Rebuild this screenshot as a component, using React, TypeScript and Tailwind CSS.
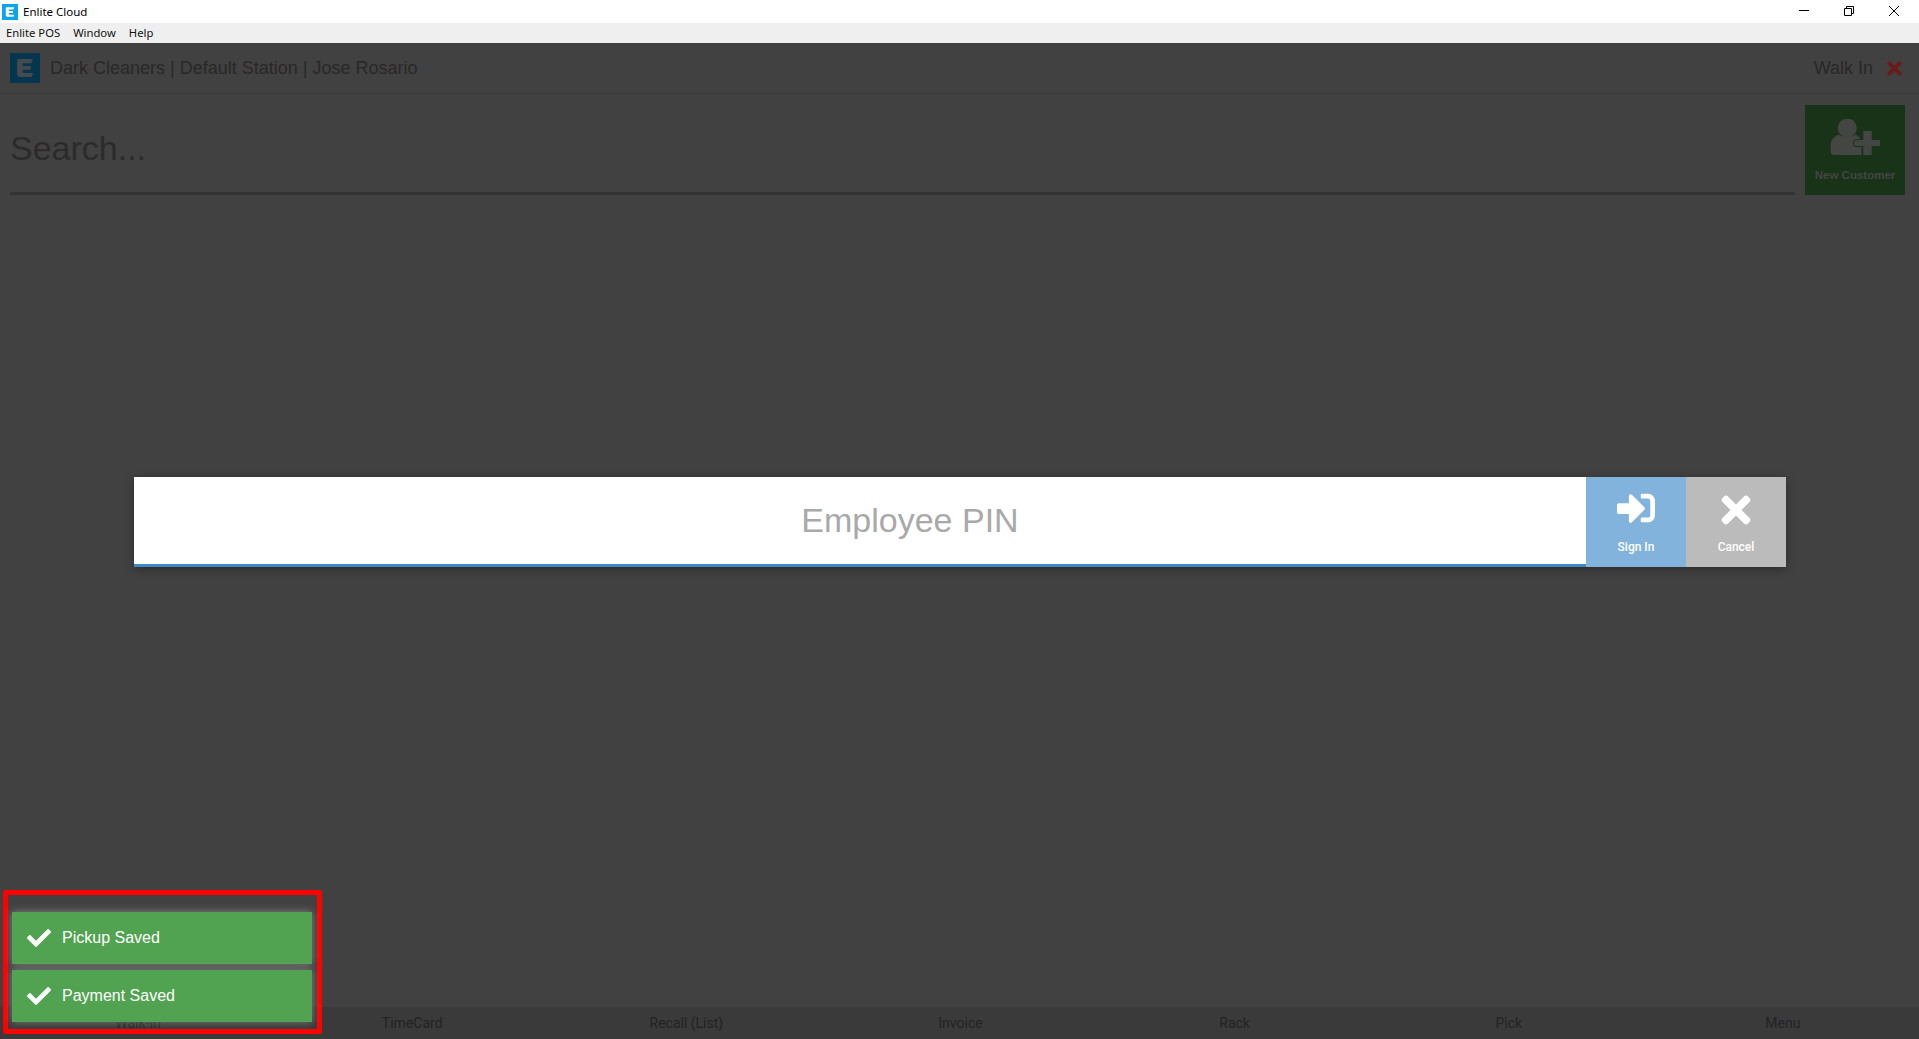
import React from 'react';
import { FaCheck, FaSignInAlt, FaTimes } from 'react-icons/fa';

const navItems = ['Walk-In', 'TimeCard', 'Recall (List)', 'Invoice', 'Rack', 'Pick', 'Menu'];

function EnliteLogo({ color }: { color: string }) {
  return (
    <svg viewBox="0 0 16 16" className="w-full h-full">
      <path
        d="M5 3.200h7.200l-.8 2.200H6.800v1.500H11v2H6.800v.9c0 .5.3.9.9.9h4.600l-.8 2.100H5.600C4.400 12.800 3.800 12 3.800 11V4.200C3.800 3.600 4.300 3.200 5 3.200z"
        fill={color}
      />
    </svg>
  );
}

function UserPlusIcon() {
  return (
    <svg viewBox="0 0 50 38" className="w-[50px] h-[38px]">
      <circle cx="17.300" cy="9" r="9.500" fill="#444644" />
      <path
        d="M9 15.500C12 19 22 19 25.500 15.500C29 17 31.500 20 31.500 24V36H4C2 36 .7 34.500 .7 32.500V26C.7 21 4 17 9 15.500z"
        fill="#444644"
      />
      <path
        d="M33.300 12h8.400v9H50v6h-8.300v9h-8.400v-9H27a3 3 0 0 1 0-6h6.300z"
        fill="#444644"
        stroke="#183318"
        strokeWidth="2"
        paintOrder="stroke"
      />
    </svg>
  );
}

export default function App() {
  return (
    <div className="relative flex flex-col h-[1039px] w-full overflow-hidden bg-[#414141] font-['Liberation_Sans',sans-serif]">
      {/* window chrome */}
      <div className="flex items-center justify-between h-[23px] bg-white shrink-0">
        <div className="flex items-center">
          <div className="w-4 h-4 ml-[2px] bg-[#0ba5ec]">
            <EnliteLogo color="#ffffff" />
          </div>
          <span className="ml-[5px] text-[11.500px] text-black font-['Noto_Sans',sans-serif]">Enlite Cloud</span>
        </div>
        <div className="flex items-center gap-[35px] pr-[20px] pb-[2px]">
          <div className="w-[10px] h-px bg-black" />
          <svg viewBox="0 0 10 10" className="w-[10px] h-[10px]" fill="none" stroke="#000">
            <path d="M.5 2.500h7v7h-7zM2.500 2.500V.5h7v7H7.500" />
          </svg>
          <svg viewBox="0 0 10 10" className="w-[10px] h-[10px]" fill="none" stroke="#000">
            <path d="M0 0l10 10M10 0L0 10" />
          </svg>
        </div>
      </div>
      <div className="flex items-center gap-[13px] h-[20px] pl-[6px] bg-[#efefef] text-[11.250px] text-[#111] font-['Noto_Sans',sans-serif] shrink-0">
        <span>Enlite POS</span>
        <span>Window</span>
        <span>Help</span>
      </div>

      {/* dimmed app */}
      <div className="relative flex flex-col flex-1 min-h-0">
        <div className="flex items-center justify-between h-[51px] px-[10px] border-b border-[#3c3c3c] shrink-0">
          <div className="flex items-center">
            <div className="w-[30px] h-[30px] bg-[#04374f]">
              <EnliteLogo color="#454a4d" />
            </div>
            <span className="ml-[10px] text-[18px] text-[#282828]">Dark Cleaners | Default Station | Jose Rosario</span>
          </div>
          <div className="flex items-center pr-[4px]">
            <span className="text-[18px] text-[#282828]">Walk In</span>
            <FaTimes className="ml-[11px] text-[#6b1a1a] text-[21px]" />
          </div>
        </div>

        <div className="flex items-start gap-[10px] pl-[10px] pr-[14px] pt-[11px] shrink-0">
          <div className="flex-1 h-[90px] flex items-center border-b-[3px] border-[#333333]">
            <span className="text-[34px] text-[#2b2b2b]">Search...</span>
          </div>
          <div className="flex flex-col items-center w-[100px] h-[90px] pt-[14px] bg-[#183318]">
            <UserPlusIcon />
            <span className="mt-[10px] text-[11.500px] font-bold text-[#444644]">New Customer</span>
          </div>
        </div>

        <div className="flex-1" />

        <div className="grid grid-cols-7 h-[32px] bg-[#3a3a3a] text-[14px] text-[#232323] font-['Roboto',sans-serif] shrink-0">
          {navItems.map(item => (
            <div key={item} className="flex items-center justify-center pl-[2px]">{item}</div>
          ))}
        </div>

        {/* employee pin dialog */}
        <div className="absolute left-[134px] top-[434px] flex w-[1652px] h-[90px] shadow-[0_2px_8px_rgba(0,0,0,0.35)]">
          <div className="flex-1 flex items-center justify-center pl-[100px] bg-white border-b-[3px] border-[#3f88c5]">
            <span className="text-[34px] text-[#a9a9a9]">Employee PIN</span>
          </div>
          <div className="flex flex-col items-center w-[100px] pt-[12px] bg-[#82b3dd] text-white">
            <FaSignInAlt className="text-[38px]" />
            <span className="mt-[11px] text-[12px] font-medium font-['Roboto',sans-serif]">Sign In</span>
          </div>
          <div className="flex flex-col items-center w-[100px] pt-[12px] bg-[#bbbbbb] text-white">
            <FaTimes className="text-[42px]" />
            <span className="mt-[7px] text-[12px] font-medium font-['Roboto',sans-serif]">Cancel</span>
          </div>
        </div>

        {/* toasts with annotation box */}
        <div className="absolute left-[3px] bottom-[5px] flex flex-col gap-[6px] w-[319px] h-[144px] pl-[4px] pt-[17px] border-[5px] border-[#ff0000] rounded-[2px]">
          {['Pickup Saved', 'Payment Saved'].map(msg => (
            <div
              key={msg}
              className="flex items-center w-[300px] h-[52px] pl-[15px] bg-[#51a351] text-white text-[16px] shadow-[0_0_8px_rgba(255,255,255,0.35)]"
            >
              <FaCheck className="text-[24px]" />
              <span className="ml-[11px]">{msg}</span>
            </div>
          ))}
        </div>
      </div>
    </div>
  );
}
